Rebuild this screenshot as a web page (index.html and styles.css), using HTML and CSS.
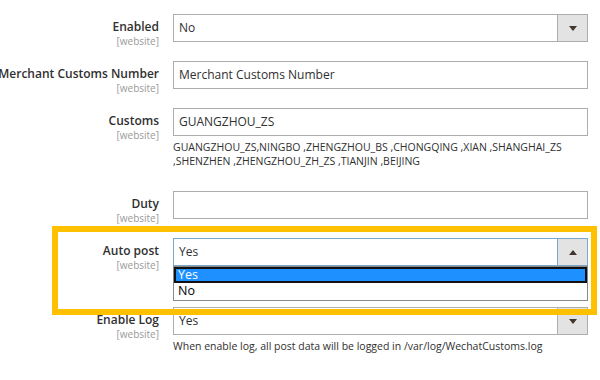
FILE: index.html
```html
<!DOCTYPE html>
<html lang="en">
<head>
    <meta charset="UTF-8">
    <meta name="viewport" content="width=device-width, initial-scale=1.0">
    <title>Wechat Customs</title>

    <link rel="stylesheet" href="styles.css">
</head>

<body>
    <div class="config">
        <div class="row">
            <div class="label">
                <span class="name">Enabled</span>
                <span class="scope">[website]</span>
            </div>
            <div class="value">
                <div class="select">
                    <span class="current">No</span>
                    <span class="arrow down"></span>
                </div>
            </div>
        </div>

        <div class="row">
            <div class="label">
                <span class="name">Merchant Customs Number</span>
                <span class="scope">[website]</span>
            </div>
            <div class="value">
                <div class="input">Merchant Customs Number</div>
            </div>
        </div>

        <div class="row">
            <div class="label">
                <span class="name">Customs</span>
                <span class="scope">[website]</span>
            </div>
            <div class="value">
                <div class="input">GUANGZHOU_ZS</div>
                <p class="note">GUANGZHOU_ZS,NINGBO ,ZHENGZHOU_BS ,CHONGQING ,XIAN ,SHANGHAI_ZS ,SHENZHEN ,ZHENGZHOU_ZH_ZS ,TIANJIN ,BEIJING</p>
            </div>
        </div>

        <div class="row row-duty">
            <div class="label">
                <span class="name">Duty</span>
                <span class="scope">[website]</span>
            </div>
            <div class="value">
                <div class="input"></div>
            </div>
        </div>

        <div class="row">
            <div class="label">
                <span class="name">Auto post</span>
                <span class="scope">[website]</span>
            </div>
            <div class="value">
                <div class="select open">
                    <span class="current">Yes</span>
                    <span class="arrow up"></span>
                    <!-- opened list of the select -->
                    <ul class="options">
                        <li class="selected">Yes</li>
                        <li>No</li>
                    </ul>
                </div>
            </div>
        </div>

        <div class="row row-log">
            <div class="label">
                <span class="name">Enable Log</span>
                <span class="scope">[website]</span>
            </div>
            <div class="value">
                <div class="select">
                    <span class="current">Yes</span>
                    <span class="arrow down"></span>
                </div>
                <p class="note">When enable log, all post data will be logged in /var/log/WechatCustoms.log</p>
            </div>
        </div>

        <!-- highlight frame around the Auto post row -->
        <div class="highlight"></div>
    </div>
</body>
</html>
```

FILE: styles.css
```css
body {
    margin: 0;
    background-color: #FFFFFF;
    font-family: 'Open Sans', 'Liberation Sans', sans-serif;
    color: #303030;
}

.config {
    position: relative;
    padding: 14px 12px 0 0;
}

.row {
    display: flex;
    align-items: flex-start;
    gap: 14px;
    margin-bottom: 19px;
}

.row-duty {
    margin-top: 23px;
}

.row-log {
    margin-top: 41px;
}

.label {
    width: 159px;
    height: 28px;
    flex-shrink: 0;
    display: flex;
    flex-direction: column;
    align-items: flex-end;
    padding-top: 5px;
    box-sizing: border-box;
    white-space: nowrap;
}

.name {
    font-size: 12px;
    font-weight: 600;
    line-height: 16px;
}

.scope {
    font-size: 10px;
    line-height: 12px;
    color: #9a9a9a;
}

.value {
    flex: 1;
}

.input, .select {
    box-sizing: border-box;
    height: 28px;
    border: 1px solid #adadad;
    background-color: #FFF;
    font-size: 12px;
    line-height: 26px;
    padding: 0 5px;
    color: #303030;
}

.select {
    position: relative;
    display: flex;
    padding-right: 0;
}

.select .current {
    flex: 1;
}

.arrow {
    width: 29px;
    background-color: #e3e3e3;
    border-left: 1px solid #adadad;
    display: flex;
    justify-content: center;
    align-items: center;
}

.arrow::after {
    content: '';
    border-left: 4px solid transparent;
    border-right: 4px solid transparent;
}

.arrow.down::after {
    border-top: 5px solid #41362f;
}

.arrow.up::after {
    border-bottom: 5px solid #41362f;
}

.select.open {
    border-color: #7ba7c9;
}

.select.open .arrow {
    border-left-color: #7ba7c9;
}

.options {
    position: absolute;
    top: 27px;
    left: -1px;
    right: -1px;
    margin: 0;
    padding: 0;
    list-style: none;
    background-color: #FFF;
    border: 1px solid #8a8a8a;
    z-index: 2;
}

.options li {
    height: 16px;
    line-height: 16px;
    padding: 0 4px;
    font-size: 12.5px;
    color: #000;
}

.options li:last-child {
    height: 17px;
}

.options li.selected {
    background-color: #1e90ff;
    color: #FFF;
    outline: 2px solid #111;
    outline-offset: -2px;
}

.note {
    margin: 4px 0 0;
    font-size: 10.5px;
    line-height: 14px;
    color: #303030;
}

.highlight {
    position: absolute;
    left: 52px;
    top: 226px;
    width: 533px;
    height: 77px;
    border: 6px solid #ffc000;
    z-index: 3;
    pointer-events: none;
}
```
